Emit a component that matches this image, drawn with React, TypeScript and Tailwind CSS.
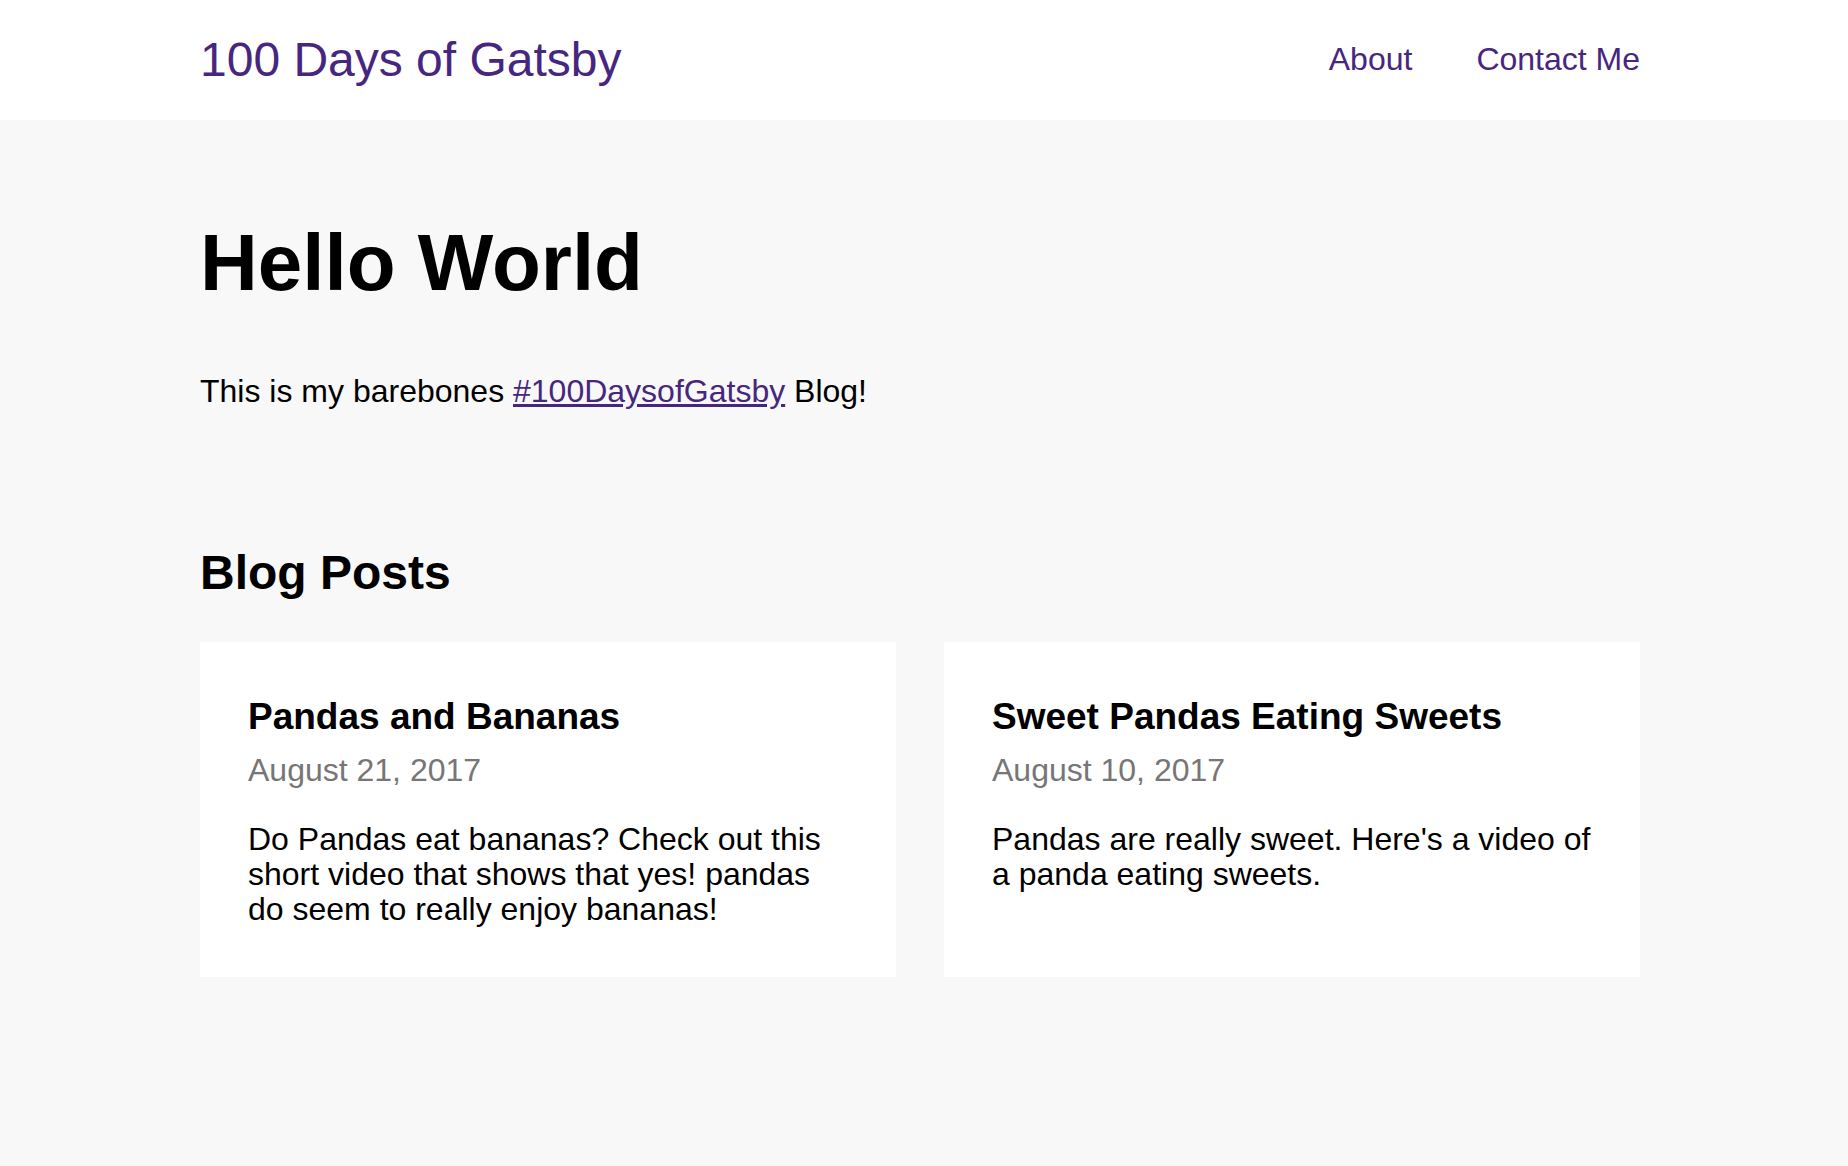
const posts = [
  {
    title: "Pandas and Bananas",
    date: "August 21, 2017",
    lines: [
      "Do Pandas eat bananas? Check out this",
      "short video that shows that yes! pandas",
      "do seem to really enjoy bananas!",
    ],
  },
  {
    title: "Sweet Pandas Eating Sweets",
    date: "August 10, 2017",
    lines: ["Pandas are really sweet. Here's a video of", "a panda eating sweets."],
  },
];

const PostCard = ({ post }: { post: (typeof posts)[number] }) => {
  return (
    <div className="bg-white pl-12 pr-8 pt-[55px] pb-[50px]">
      <h3 className="text-[37px] font-bold leading-[1.1] text-black">{post.title}</h3>
      <div className="mt-[15px] text-[32px] leading-[1.1] text-[#767676]">{post.date}</div>
      <p className="mt-[34px] text-[32px] leading-[1.1] text-black">
        {post.lines.map((line, i) => (
          <span key={i} className="block whitespace-nowrap">
            {line}
          </span>
        ))}
      </p>
    </div>
  );
};

const App = () => {
  return (
    <div className="min-h-screen bg-[#f8f8f8] font-['Liberation_Sans',Arial,sans-serif]">
      {/* header */}
      <header className="bg-white h-[120px] pl-[200px]">
        <div className="w-[1440px] h-full flex items-center justify-between">
          <a href="#" className="text-[48px] leading-[1.1] text-[#472680]">
            100 Days of Gatsby
          </a>
          <nav className="flex items-center gap-[64px]">
            <a href="#" className="text-[32px] leading-[1.1] text-[#472680]">
              About
            </a>
            <a href="#" className="text-[32px] leading-[1.1] text-[#472680]">
              Contact Me
            </a>
          </nav>
        </div>
      </header>

      <main className="pl-[200px] pt-[99px] pb-24">
        <div className="w-[1440px]">
          <h1 className="text-[80px] font-bold leading-[1.1] text-black">Hello World</h1>
          <p className="mt-[67px] text-[32px] leading-[1.1] text-black">
            This is my barebones{" "}
            <a href="#" className="text-[#472680] underline">
              #100DaysofGatsby
            </a>{" "}
            Blog!
          </p>

          <h2 className="mt-[138px] text-[48px] font-bold leading-[1.1] text-black">Blog Posts</h2>
          <div className="mt-[42px] grid grid-cols-2 gap-12">
            {posts.map((post) => (
              <PostCard key={post.title} post={post} />
            ))}
          </div>
        </div>
      </main>
    </div>
  );
};

export default App;
